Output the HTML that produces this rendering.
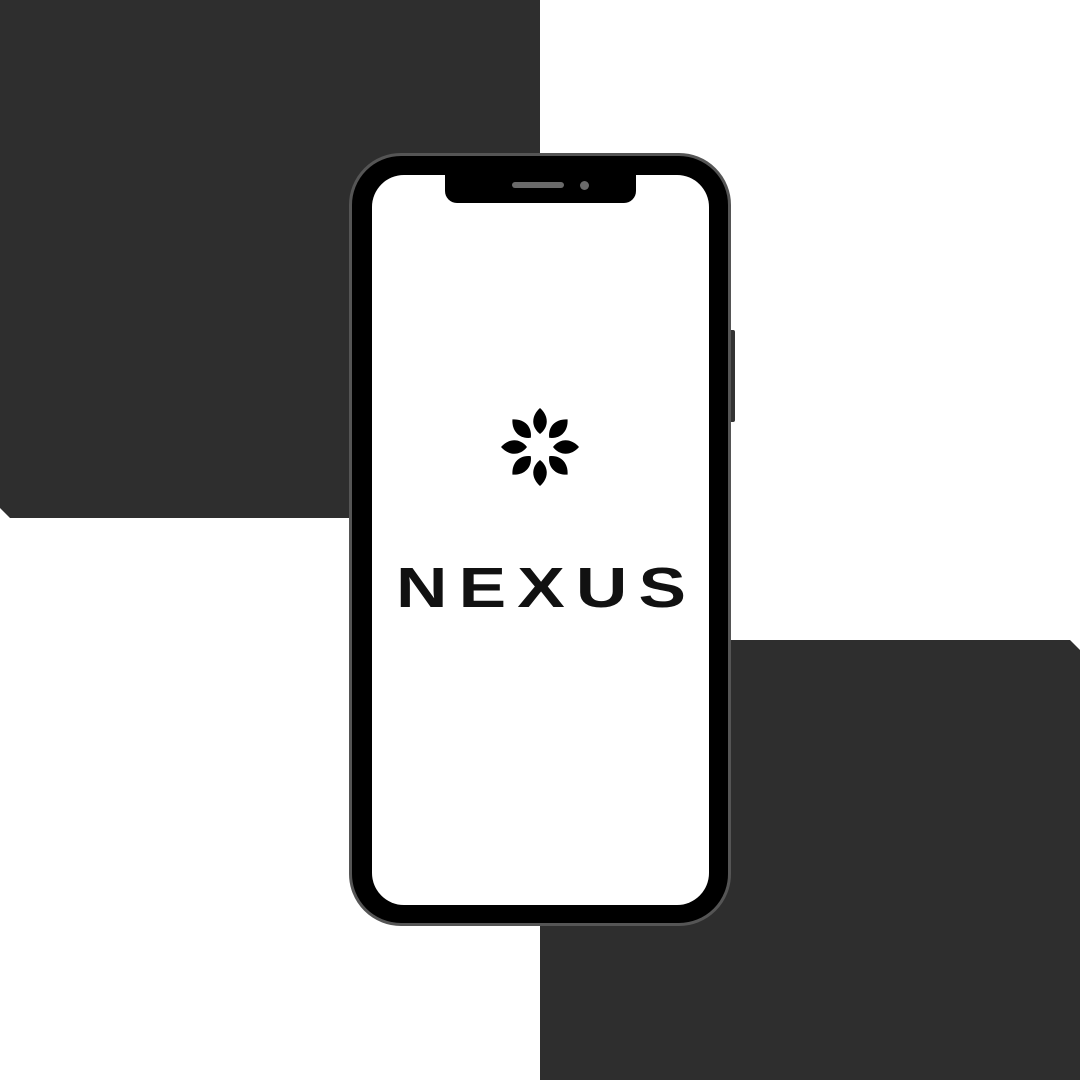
<!DOCTYPE html>
<html><head><meta charset="utf-8"><style>
html,body{margin:0;padding:0}
body{width:1080px;height:1080px;background:#fff;position:relative;overflow:hidden}
.sq{position:absolute;background:#2e2e2e}
</style></head><body>
<div class="sq" style="left:0;top:0;width:540px;height:518px;clip-path:polygon(0 0,100% 0,100% 100%,10px 100%,0 508px)"></div>
<div class="sq" style="left:540px;top:640px;width:540px;height:440px;clip-path:polygon(0 0,530px 0,540px 10px,100% 100%,0 100%)"></div>
<div style="position:absolute;left:729px;top:330px;width:6px;height:92px;background:#333;border-radius:2px"></div>
<div style="position:absolute;left:349px;top:153px;width:376px;height:767px;background:#000;border:3px solid #555;border-radius:52px"></div>
<div style="position:absolute;left:372px;top:175px;width:337px;height:730px;background:#fff;border-radius:32px"></div>
<div style="position:absolute;left:445px;top:172px;width:191px;height:31px;background:#000;border-radius:0 0 12px 12px"></div>
<div style="position:absolute;left:512px;top:182px;width:52px;height:6px;background:#6a6a6a;border-radius:3px"></div>
<div style="position:absolute;left:580px;top:181px;width:9px;height:9px;background:#6a6a6a;border-radius:50%"></div>
<svg style="position:absolute;left:0;top:0" width="1080" height="1080">
<g transform="translate(540,447)" fill="#000">
<path id="p" d="M0,-13 C-9,-20 -9,-31 0,-39 C9,-31 9,-20 0,-13Z"/>
<use href="#p" transform="rotate(45)"/><use href="#p" transform="rotate(90)"/><use href="#p" transform="rotate(135)"/>
<use href="#p" transform="rotate(180)"/><use href="#p" transform="rotate(225)"/><use href="#p" transform="rotate(270)"/><use href="#p" transform="rotate(315)"/>
</g>
<g transform="scale(1.25,1)">
<text x="316.8" y="607" font-family="Liberation Sans, sans-serif" font-weight="bold" font-size="57" textLength="232" lengthAdjust="spacing" fill="#111">NEXUS</text>
</g>
</svg>
</body></html>
